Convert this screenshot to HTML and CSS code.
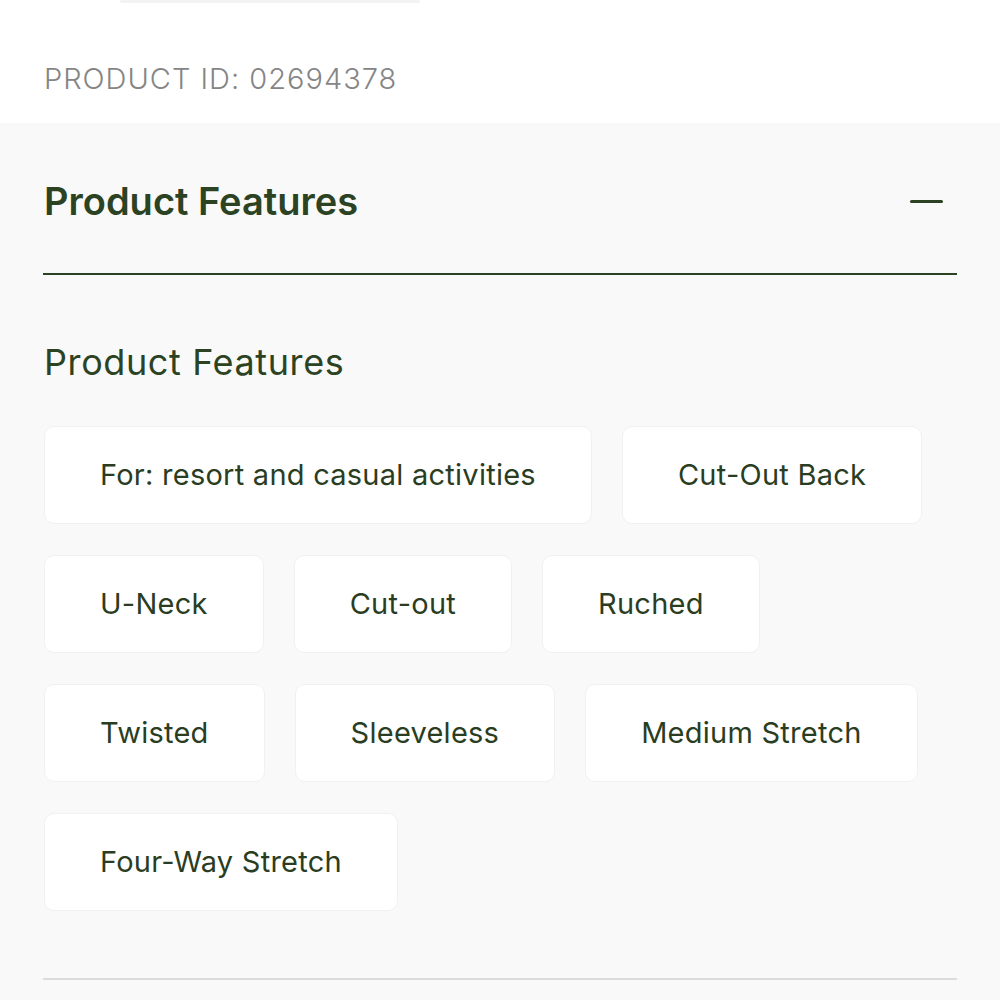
FILE: index.html
```html
<!DOCTYPE html>
<html lang="en">
<head>
<meta charset="utf-8">
<title>Product Features</title>
<link rel="stylesheet" href="styles.css">
</head>
<body>
<div class="top">
  <div class="top-edge"></div>
  <div class="product-id">PRODUCT ID: 02694378</div>
</div>
<section class="panel">
  <div class="accordion-head">
    <h2 class="accordion-title">Product Features</h2>
    <span class="minus" aria-hidden="true"></span>
  </div>
  <h3 class="sub-title">Product Features</h3>
  <ul class="chips">
    <li class="chip">For: resort and casual activities</li>
    <li class="chip">Cut-Out Back</li>
    <li class="chip">U-Neck</li>
    <li class="chip">Cut-out</li>
    <li class="chip">Ruched</li>
    <li class="chip">Twisted</li>
    <li class="chip">Sleeveless</li>
    <li class="chip">Medium Stretch</li>
    <li class="chip">Four-Way Stretch</li>
  </ul>
  <div class="bottom-rule"></div>
</section>
</body>
</html>
```
FILE: styles.css
```css
* { box-sizing: border-box; }
html, body { margin: 0; padding: 0; }
body {
  background: #f9f9f9;
  font-family: Inter, "Open Sans", sans-serif;
  color: #2c4323;
}
.top {
  background: #ffffff;
  height: 123px;
  padding-left: 44px;
}
.top-edge {
  width: 300px;
  height: 3px;
  margin-left: 76px;
  background: #f3f3f3;
  border-radius: 2px;
}
.product-id {
  margin-top: 56px;
  font-size: 29px;
  line-height: 40px;
  font-weight: 300;
  letter-spacing: 1px;
  color: #858585;
}
.panel {
  padding: 0 43px;
}
.accordion-head {
  display: flex;
  align-items: center;
  justify-content: space-between;
  padding: 56px 14px 50px 1px;
  border-bottom: 2px solid #2c4323;
}
.accordion-title {
  margin: 0;
  font-size: 38px;
  line-height: 44px;
  font-weight: 600;
}
.minus {
  width: 33px;
  height: 3px;
  border-radius: 2px;
  background: #2c4323;
}
.sub-title {
  margin: 65px 0 42px 1px;
  font-size: 36px;
  line-height: 44px;
  font-weight: 400;
  letter-spacing: 0.6px;
}
.chips {
  list-style: none;
  margin: 0;
  padding: 0 0 0 1px;
  display: flex;
  flex-wrap: wrap;
  column-gap: 30px;
  row-gap: 31px;
}
.chip {
  height: 98px;
  display: flex;
  align-items: center;
  padding: 0 55px 2px;
  background: #ffffff;
  border: 1px solid #f1f1f1;
  border-radius: 10px;
  font-size: 29px;
  letter-spacing: 0.25px;
  color: #2a3d22;
}
.bottom-rule {
  margin-top: 67px;
  height: 2px;
  background: #dcdcdc;
}
```
